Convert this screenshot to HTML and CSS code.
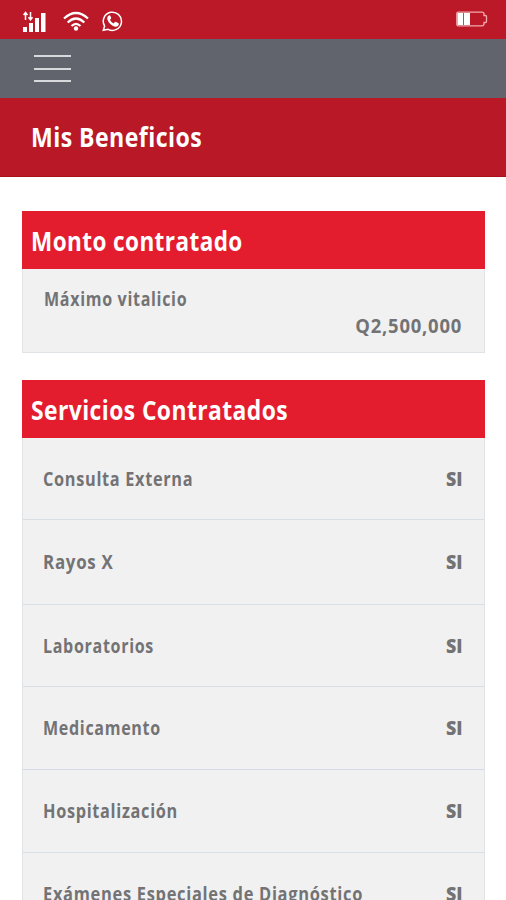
FILE: index.html
```html
<!DOCTYPE html>
<html lang="es">
<head>
<meta charset="utf-8">
<meta name="viewport" content="width=device-width, initial-scale=1">
<title>Mis Beneficios</title>
<link rel="stylesheet" href="styles.css">
</head>
<body>
<div class="status">
  <svg class="signal" width="24" height="22" viewBox="0 0 24 22" fill="#fff" aria-hidden="true">
    <path d="M0 16h4v5H0zM6 12h4v9H6zM12 7h4v14h-4zM18 2h4.500v19H18z"/>
    <path d="M2.500 9V2M.5 4l2-2.500 2 2.500M7.500 1v7M5.500 6.300l2 2.500 2-2.500" fill="none" stroke="#fff" stroke-width="1.500"/>
  </svg>
  <svg class="wifi" width="26" height="21" viewBox="0 0 26 21" fill="none" stroke="#fff" stroke-width="2.200" aria-hidden="true">
    <path d="M1 7.500Q13-3.500 25 7.500M4.700 11.500Q13 3.500 21.300 11.500M8.500 15Q13 10.700 17.500 15"/>
    <circle cx="13" cy="17.500" r="2.200" fill="#fff" stroke="none"/>
  </svg>
  <svg class="phone" width="22" height="22" viewBox="0 0 22 22" aria-hidden="true">
    <path d="M1.300 19.300 2.600 15A9.100 9.100 0 1 1 6.100 18.300Z" fill="none" stroke="#fff" stroke-width="1.500"/>
    <path d="M7 4.500c-1.700.9-2.200 2.700-1.400 4.500 1.200 3.200 3.600 5.500 6.800 6.500 2 .6 3.700-.1 4.400-2l-.2-1.200-2.800-1.500-.9.300-1.200 1.400c-1.700-.8-2.900-2-3.700-3.700l1.100-1.400v-.9L8 4.300z" fill="#fff"/>
  </svg>
  <svg class="battery" width="32" height="16" viewBox="0 0 32 16" aria-hidden="true">
    <path d="M2 1.200h24q2 0 2 2v1.300h1.500q1 0 1 1v5q0 1-1 1H28v1.300q0 2-2 2H2q-1.200 0-1.200-1.500V2.700Q.8 1.200 2 1.200z" fill="none" stroke="#f3a9ad" stroke-width="1.300"/>
    <path d="M1.500 2h5.500v12H1.500zM7.800 2h6.200v12H7.800z" fill="#fff"/>
  </svg>
</div>
<nav class="nav"><button class="menu" aria-label="Menú"><i></i><i></i><i></i></button></nav>
<header class="title"><h1><span class="fit page-name">Mis Beneficios</span></h1></header>
<main>
  <section class="card amount">
    <h2><span class="fit amount-name">Monto contratado</span></h2>
    <div class="amount-body">
      <p><span class="fit">Máximo vitalicio</span></p>
      <p class="value"><span class="fit money">Q2,500,000</span></p>
    </div>
  </section>
  <section class="card services">
    <h2><span class="fit services-name">Servicios Contratados</span></h2>
    <ul>
      <li><span class="fit medium">Consulta Externa</span><b>SI</b></li>
      <li><span class="fit short">Rayos X</span><b>SI</b></li>
      <li><span class="fit">Laboratorios</span><b>SI</b></li>
      <li><span class="fit">Medicamento</span><b>SI</b></li>
      <li><span class="fit medium">Hospitalización</span><b>SI</b></li>
      <li><span class="fit long">Exámenes Especiales de Diagnóstico</span><b>SI</b></li>
    </ul>
  </section>
</main>
</body>
</html>
```

FILE: styles.css
```css
* { box-sizing: border-box; }
body {
  margin: 0;
  height: 900px;
  overflow: hidden;
  background: #fff;
  color: #737375;
  font: 700 19px/26px "Open Sans", "Noto Sans", sans-serif;
}
h1, h2, p, ul { margin: 0; padding: 0; }
.fit {
  display: inline-block;
  white-space: nowrap;
  letter-spacing: .8px;
  transform: scaleX(.845);
  transform-origin: left center;
}
h1 .fit, h2 .fit { letter-spacing: .5px; }
.page-name { transform: scaleX(.888); }
.amount-name { transform: scaleX(.865); }
.services-name { transform: scaleX(.878); }
.money { transform: scaleX(.97); transform-origin: right center; }
.short { transform: scaleX(.89); }
.medium { transform: scaleX(.857); }
.long { transform: scaleX(.866); }
b { transform: scaleX(.94); transform-origin: right center; }
.status {
  height: 39px;
  display: flex;
  align-items: flex-start;
  padding: 11px 18px 0 23px;
  background: #bb1828;
}
.wifi { margin-left: 16px; }
.phone { margin-left: 13px; }
.battery { margin: 0 0 0 auto; }
.nav { height: 59px; padding: 16px 34px; background: #61646c; }
.menu {
  display: flex;
  flex-direction: column;
  gap: 10.500px;
  width: 37px;
  padding: 0;
  border: 0;
  background: none;
}
.menu i { height: 2px; width: 37px; background: #d8d9dc; }
.title { height: 79px; padding: 0 31px; background: #b91827; border-bottom: 1px solid #aa101c; }
h1, h2 { color: #fff; font-size: 26px; font-weight: 700; white-space: nowrap; }
h1 { line-height: 79px; }
main { padding: 34px 21px 0 22px; }
.card { border: 1px solid #e1e4e6; border-top: 0; background: #f1f1f1; }
.card h2 { height: 58px; line-height: 61px; margin: 0 -1px; padding-left: 9px; background: #e41d2e; }
.amount { height: 142px; margin-bottom: 27px; }
.amount-body { padding: 17px 22px 0 21px; }
.value { text-align: right; margin-top: 1px; }
ul { list-style: none; }
li {
  display: flex;
  justify-content: space-between;
  align-items: center;
  height: 83px;
  padding: 0 21px 0 20px;
  border-bottom: 1px solid #dadfe3;
}
li:nth-child(1), li:nth-child(3) { height: 82px; }
li:nth-child(2) { height: 85px; }
li:nth-child(4) { border-color: #d4d9ea; }
```
